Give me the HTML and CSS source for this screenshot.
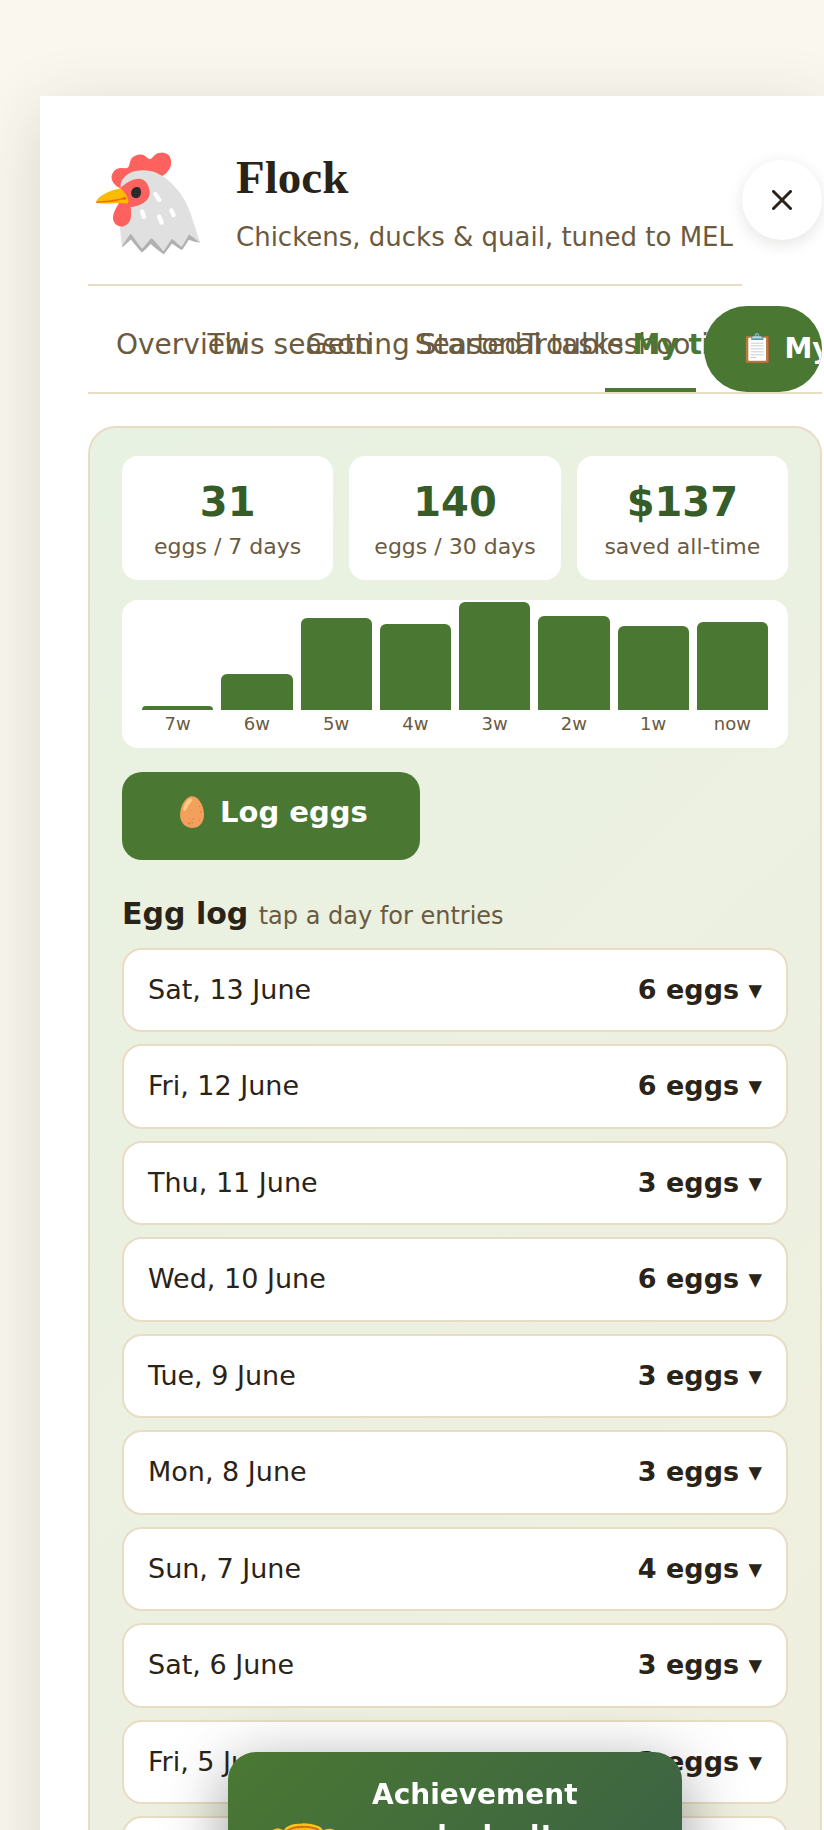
FILE: index.html
```html
<!DOCTYPE html>
<html lang="en">
<head>
  <meta charset="UTF-8">
  <title>Flock</title>
  <meta name="viewport" content="width=device-width, initial-scale=1.0">
  <link rel="stylesheet" href="styles.css">
</head>
<body>

  <main class="panel">
    <div class="top">
      <header class="header">
        <span class="hero-icon">🐔</span>
        <div>
          <h1>Flock</h1>
          <p>Chickens, ducks &amp; quail, tuned to MEL</p>
        </div>
      </header>
      <button class="close" aria-label="Close">
        <svg viewBox="0 0 20 20" width="20" height="20" fill="none" stroke="currentColor" stroke-width="3" stroke-linecap="round">
          <path d="M1.5 1.5 18.5 18.5M18.5 1.5 1.5 18.5"/>
        </svg>
      </button>
    </div>

    <nav class="tabs">
      <button class="tab">Overview</button>
      <button class="tab">This season</button>
      <button class="tab">Getting Started</button>
      <button class="tab">Seasonal tasks</button>
      <button class="tab">Troubleshooting</button>
      <button class="tab active">My tracker</button>
      <button class="pill">📋 My Planner</button>
    </nav>

    <section class="tracker">
      <div class="stats">
        <div class="stat"><b>31</b><span>eggs / 7 days</span></div>
        <div class="stat"><b>140</b><span>eggs / 30 days</span></div>
        <div class="stat"><b>$137</b><span>saved all-time</span></div>
      </div>

      <div class="chart">
        <div class="week"><div class="bar" style="height: 4px"></div>7w</div>
        <div class="week"><div class="bar" style="height: 36px"></div>6w</div>
        <div class="week"><div class="bar" style="height: 92px"></div>5w</div>
        <div class="week"><div class="bar" style="height: 86px"></div>4w</div>
        <div class="week"><div class="bar" style="height: 108px"></div>3w</div>
        <div class="week"><div class="bar" style="height: 94px"></div>2w</div>
        <div class="week"><div class="bar" style="height: 84px"></div>1w</div>
        <div class="week"><div class="bar" style="height: 88px"></div>now</div>
      </div>

      <button class="log-btn">🥚 Log eggs</button>

      <h2>Egg log <small>tap a day for entries</small></h2>
      <div class="days">
        <button class="day">Sat, 13 June <b>6 eggs ▾</b></button>
        <button class="day">Fri, 12 June <b>6 eggs ▾</b></button>
        <button class="day">Thu, 11 June <b>3 eggs ▾</b></button>
        <button class="day">Wed, 10 June <b>6 eggs ▾</b></button>
        <button class="day">Tue, 9 June <b>3 eggs ▾</b></button>
        <button class="day">Mon, 8 June <b>3 eggs ▾</b></button>
        <button class="day">Sun, 7 June <b>4 eggs ▾</b></button>
        <button class="day">Sat, 6 June <b>3 eggs ▾</b></button>
        <button class="day">Fri, 5 June <b>3 eggs ▾</b></button>
        <button class="day">Thu, 4 June <b>4 eggs ▾</b></button>
      </div>
    </section>
  </main>

  <div class="toast" role="status">
    <span class="toast-icon">🏆</span>
    <strong>Achievement unlocked!</strong>
  </div>

</body>
</html>
```

FILE: styles.css
```css
* {
  box-sizing: border-box;
}

body {
  font-family: "DejaVu Sans", sans-serif;
  margin: 0;
  height: 100vh;
  overflow: hidden;
  background: #faf7ef;
  color: #2a2318;
  line-height: 1.5;
}

button {
  font-family: inherit;
  line-height: inherit;
  color: inherit;
  border: none;
  background: none;
  padding: 0;
  cursor: pointer;
}

.panel {
  margin: 96px 0 0 40px;
  padding: 48px 2px 48px 48px;
  background: #fff;
  box-shadow: 0 16px 64px rgba(40, 42, 24, 0.16);
}

.top {
  display: flex;
  align-items: flex-start;
}

.header {
  flex: 1;
  display: flex;
  align-items: center;
  gap: 28px;
  height: 142px;
  padding-bottom: 24px;
  border-bottom: 2px solid #e8dcc4;
}

.hero-icon {
  font-size: 96px;
  line-height: 1;
}

h1 {
  font-family: "Liberation Serif", serif;
  font-size: 47px;
  line-height: 58px;
  margin: 0;
}

.header p {
  font-size: 26px;
  margin: 12px 0 0;
  color: #6b5a40;
  white-space: nowrap;
}

.close {
  display: flex;
  align-items: center;
  justify-content: center;
  width: 80px;
  height: 80px;
  margin-top: 16px;
  border-radius: 50%;
  background: #fff;
  box-shadow: 0 4px 16px rgba(42, 35, 24, 0.12);
}

.tabs {
  display: flex;
  gap: 8px;
  margin: 20px 0 32px;
  border-bottom: 2px solid #e8dcc4;
}

.tab {
  min-width: 0;
  padding: 18px 28px 22px;
  font-size: 28px;
  color: #6b5a40;
  white-space: nowrap;
  border-bottom: 4px solid transparent;
}

.tab.active {
  color: #4a7833;
  font-weight: bold;
  border-bottom-color: #4a7833;
}

.pill {
  min-width: 0;
  padding: 20px 36px;
  font-size: 28px;
  font-weight: bold;
  color: #fff;
  white-space: nowrap;
  background: #4a7833;
  border-radius: 43px;
  overflow: hidden;
}

.tracker {
  padding: 28px 32px;
  border: 2px solid #e8dcc4;
  border-radius: 28px;
  background: linear-gradient(135deg, #e8f2e2, #f0efdf);
}

.stats {
  display: grid;
  grid-template-columns: repeat(3, 1fr);
  gap: 16px;
}

.stat {
  padding: 16px 8px 18px;
  text-align: center;
  background: #fff;
  border-radius: 16px;
}

.stat b {
  display: block;
  font-size: 40px;
  line-height: 60px;
  color: #365c28;
}

.stat span {
  display: block;
  font-size: 22px;
  line-height: 30px;
  color: #6b5a40;
}

.chart {
  display: flex;
  align-items: flex-end;
  gap: 8px;
  margin-top: 20px;
  padding: 2px 20px 10px;
  background: #fff;
  border-radius: 16px;
}

.week {
  flex: 1;
  font-size: 18px;
  line-height: 28px;
  text-align: center;
  color: #6b5a40;
}

.bar {
  background: #4a7833;
  border-radius: 6px 6px 0 0;
}

.log-btn {
  margin-top: 24px;
  padding: 19px 52px 25px;
  font-size: 29px;
  font-weight: bold;
  color: #fff;
  background: #4a7833;
  border-radius: 20px;
}

h2 {
  font-size: 30px;
  margin: 31px 0 12px;
}

h2 small {
  font-size: 24px;
  font-weight: normal;
  color: #6b5a40;
}

.days {
  display: grid;
  gap: 12px;
}

.day {
  display: flex;
  justify-content: space-between;
  padding: 20px 24px;
  font-size: 27px;
  background: #fff;
  border: 2px solid #e8dcc4;
  border-radius: 20px;
}

.toast {
  position: fixed;
  top: 1752px;
  left: 228px;
  right: 142px;
  display: flex;
  gap: 28px;
  min-height: 212px;
  padding: 22px 106px 22px 36px;
  font-size: 28px;
  text-align: center;
  color: #fff;
  background: linear-gradient(135deg, #4a7833, #3a5f47);
  border-radius: 28px;
  box-shadow: 0 16px 64px rgba(0, 0, 0, 0.4);
}

.toast-icon {
  align-self: center;
  font-size: 64px;
}
```
